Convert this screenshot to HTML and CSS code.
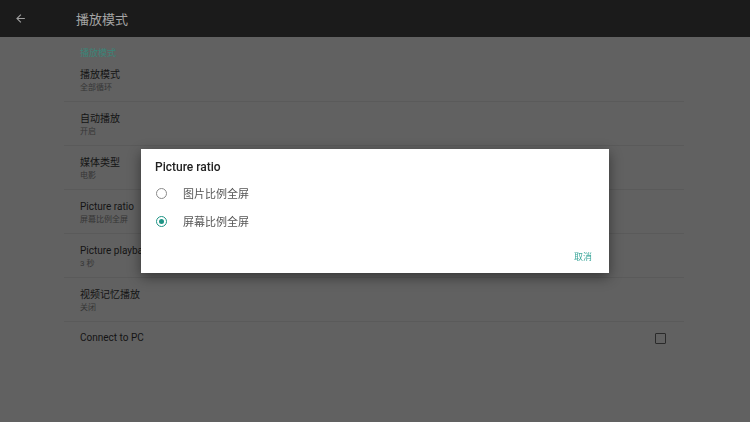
FILE: index.html
```
<!DOCTYPE html>
<html lang="zh-CN">
<head>
    <meta charset="UTF-8">
    <meta name="viewport" content="width=device-width, initial-scale=1.0">
    <title>播放模式</title>
    <link rel="stylesheet" href="styles.css">
</head>
<body>
    <header class="toolbar">
        <span class="back">
            <svg width="13" height="13" viewBox="0 0 24 24"><path d="M20 11H7.83l5.59-5.59L12 4l-8 8 8 8 1.41-1.41L7.83 13H20v-2z" fill="#a0a0a0"/></svg>
        </span>
        <span class="toolbar-title">播放模式</span>
    </header>

    <main class="prefs">
        <div class="category">播放模式</div>

        <div class="pref">
            <div class="pref-title">播放模式</div>
            <div class="pref-summary">全部循环</div>
        </div>
        <div class="pref">
            <div class="pref-title">自动播放</div>
            <div class="pref-summary">开启</div>
        </div>
        <div class="pref">
            <div class="pref-title">媒体类型</div>
            <div class="pref-summary">电影</div>
        </div>
        <div class="pref">
            <div class="pref-title">Picture ratio</div>
            <div class="pref-summary">屏幕比例全屏</div>
        </div>
        <div class="pref">
            <div class="pref-title">Picture playback</div>
            <div class="pref-summary">3 秒</div>
        </div>
        <div class="pref">
            <div class="pref-title">视频记忆播放</div>
            <div class="pref-summary">关闭</div>
        </div>
        <div class="pref pref-single">
            <div class="pref-title">Connect to PC</div>
            <span class="checkbox"></span>
        </div>
    </main>

    <div class="overlay">
        <div class="dialog">
            <div class="dialog-title">Picture ratio</div>
            <div class="option">
                <span class="radio"></span>
                <span class="option-label">图片比例全屏</span>
            </div>
            <div class="option">
                <span class="radio checked"></span>
                <span class="option-label">屏幕比例全屏</span>
            </div>
            <div class="dialog-actions">
                <span class="cancel">取消</span>
            </div>
        </div>
    </div>
</body>
</html>
```

FILE: styles.css
```
body {
    margin: 0;
    padding: 0;
    width: 750px;
    height: 422px;
    overflow: hidden;
    background-color: #616161;
    font-family: 'Roboto', 'Noto Sans CJK SC', sans-serif;
}

.toolbar {
    height: 37px;
    background-color: #1b1b1b;
    display: flex;
    align-items: center;
}

.back {
    width: 13px;
    height: 13px;
    margin-left: 14px;
    display: flex;
}

.toolbar-title {
    margin-left: 49px;
    font-size: 13px;
    color: #a4a4a4;
}

.prefs {
    margin: 0 66px 0 64px;
}

.category {
    padding: 11px 0 0 16px;
    height: 10px;
    line-height: 10px;
    font-size: 9px;
    color: #3a8578;
}

.pref {
    padding: 10px 18px 7px 16px;
    border-bottom: 1px solid #5a5a5a;
}

.pref-title {
    font-size: 10px;
    line-height: 14px;
    color: #141414;
}

.pref-summary {
    font-size: 8px;
    line-height: 12px;
    color: #363636;
}

.pref-single {
    border-bottom: none;
    display: flex;
    justify-content: space-between;
    align-items: center;
    padding-top: 9px;
}

.checkbox {
    width: 9px;
    height: 9px;
    border: 1px solid #2a2a2a;
    border-radius: 1px;
}

.overlay {
    position: fixed;
    top: 0;
    left: 0;
    right: 0;
    bottom: 0;
    display: flex;
    justify-content: center;
    align-items: center;
}

.dialog {
    width: 468px;
    height: 124px;
    box-sizing: border-box;
    background-color: #ffffff;
    padding: 11px 17px 9px 14px;
    box-shadow: 0 4px 12px rgba(0, 0, 0, 0.45);
    display: flex;
    flex-direction: column;
}

.dialog-title {
    font-size: 12px;
    line-height: 14px;
    font-weight: 500;
    color: #212121;
    margin-bottom: 5px;
}

.option {
    height: 28px;
    display: flex;
    align-items: center;
}

.radio {
    width: 9px;
    height: 9px;
    border: 1.5px solid #8a8a8a;
    border-radius: 50%;
    margin-left: 1px;
    position: relative;
}

.radio.checked {
    border-color: #1e9485;
}

.radio.checked::after {
    content: '';
    position: absolute;
    top: 2px;
    left: 2px;
    width: 5px;
    height: 5px;
    border-radius: 50%;
    background-color: #1e9485;
}

.option-label {
    margin-left: 16px;
    font-size: 11px;
    color: #555555;
}

.dialog-actions {
    margin-top: auto;
    display: flex;
    justify-content: flex-end;
}

.cancel {
    font-size: 9px;
    line-height: 14px;
    color: #3fa89c;
}
```
